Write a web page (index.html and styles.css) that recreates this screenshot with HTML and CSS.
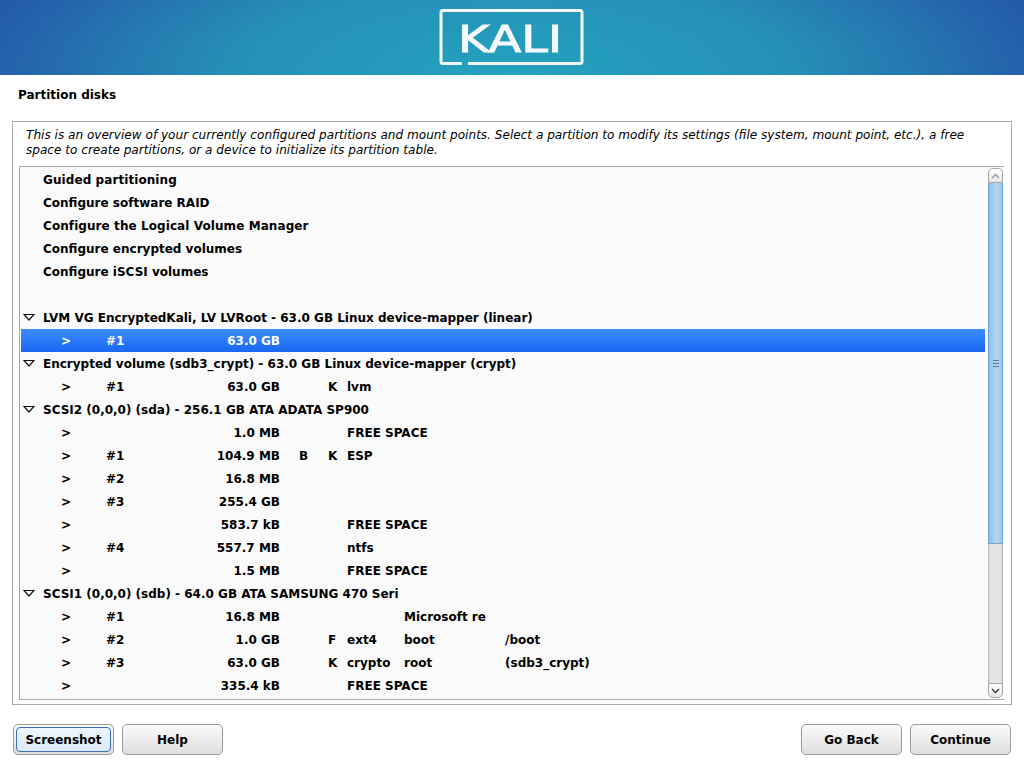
FILE: index.html
```html
<!DOCTYPE html>
<html lang="en">
<head>
<meta charset="utf-8">
<title>Partition disks</title>
<link rel="stylesheet" href="styles.css">
</head>
<body>
<header class="banner">
  <svg class="logo" width="146" height="60" viewBox="0 0 146 60">
    <path class="logo-frame" d="M23 54.500H4Q2 54.500 2 52.500V3.500Q2 1.500 4 1.500H141Q143 1.500 143 3.500V52.500Q143 54.500 141 54.500H29"/>
    <text class="logo-text" x="19" y="43" textLength="104" lengthAdjust="spacingAndGlyphs">KALI</text>
  </svg>
</header>
<h1 class="title">Partition disks</h1>
<main class="panel">
  <p class="intro">This is an overview of your currently configured partitions and mount points. Select a partition to modify its settings (file system, mount point, etc.), a free space to create partitions, or a device to initialize its partition table.</p>
  <div class="listbox">
    <div class="rows">
      <div class="row head menu">Guided partitioning</div>
      <div class="row head">Configure software RAID</div>
      <div class="row head menu">Configure the Logical Volume Manager</div>
      <div class="row head">Configure encrypted volumes</div>
      <div class="row head">Configure iSCSI volumes</div>
      <div class="row head"></div>
      <div class="row head"><svg class="tri" width="12" height="7" viewBox="0 0 12 7"><path d="M1 .5H11L6 6Z"/></svg>LVM VG EncryptedKali, LV LVRoot - 63.0 GB Linux device-mapper (linear)</div>
      <div class="row part selected"><span>&gt;</span><span>#1</span><span class="size">63.0 GB</span><span></span><span></span><span></span><span></span><span></span></div>
      <div class="row head"><svg class="tri" width="12" height="7" viewBox="0 0 12 7"><path d="M1 .5H11L6 6Z"/></svg>Encrypted volume (sdb3_crypt) - 63.0 GB Linux device-mapper (crypt)</div>
      <div class="row part"><span>&gt;</span><span>#1</span><span class="size">63.0 GB</span><span></span><span>K</span><span>lvm</span><span></span><span></span></div>
      <div class="row head"><svg class="tri" width="12" height="7" viewBox="0 0 12 7"><path d="M1 .5H11L6 6Z"/></svg>SCSI2 (0,0,0) (sda) - 256.1 GB ATA ADATA SP900</div>
      <div class="row part"><span>&gt;</span><span></span><span class="size">1.0 MB</span><span></span><span></span><span>FREE SPACE</span><span></span><span></span></div>
      <div class="row part"><span>&gt;</span><span>#1</span><span class="size">104.9 MB</span><span>B</span><span>K</span><span>ESP</span><span></span><span></span></div>
      <div class="row part"><span>&gt;</span><span>#2</span><span class="size">16.8 MB</span><span></span><span></span><span></span><span></span><span></span></div>
      <div class="row part"><span>&gt;</span><span>#3</span><span class="size">255.4 GB</span><span></span><span></span><span></span><span></span><span></span></div>
      <div class="row part"><span>&gt;</span><span></span><span class="size">583.7 kB</span><span></span><span></span><span>FREE SPACE</span><span></span><span></span></div>
      <div class="row part"><span>&gt;</span><span>#4</span><span class="size">557.7 MB</span><span></span><span></span><span>ntfs</span><span></span><span></span></div>
      <div class="row part"><span>&gt;</span><span></span><span class="size">1.5 MB</span><span></span><span></span><span>FREE SPACE</span><span></span><span></span></div>
      <div class="row head"><svg class="tri" width="12" height="7" viewBox="0 0 12 7"><path d="M1 .5H11L6 6Z"/></svg>SCSI1 (0,0,0) (sdb) - 64.0 GB ATA SAMSUNG 470 Seri</div>
      <div class="row part"><span>&gt;</span><span>#1</span><span class="size">16.8 MB</span><span></span><span></span><span></span><span>Microsoft re</span><span></span></div>
      <div class="row part"><span>&gt;</span><span>#2</span><span class="size">1.0 GB</span><span></span><span>F</span><span>ext4</span><span>boot</span><span>/boot</span></div>
      <div class="row part"><span>&gt;</span><span>#3</span><span class="size">63.0 GB</span><span></span><span>K</span><span>crypto</span><span>root</span><span>(sdb3_crypt)</span></div>
      <div class="row part"><span>&gt;</span><span></span><span class="size">335.4 kB</span><span></span><span></span><span>FREE SPACE</span><span></span><span></span></div>
    </div>
    <div class="scrollbar">
      <div class="step step-up"><svg width="9" height="6" viewBox="0 0 9 6"><path d="M1 5L4.500 1.500L8 5"/></svg></div>
      <div class="thumb"><i></i><i></i><i></i></div>
      <div class="trough"></div>
      <div class="step step-down"><svg width="9" height="6" viewBox="0 0 9 6"><path d="M1 1L4.500 4.500L8 1"/></svg></div>
    </div>
  </div>
</main>
<footer class="actions">
  <div class="focus-ring"><button class="btn btn-focus">Screenshot</button></div>
  <button class="btn">Help</button>
  <div class="spacer"></div>
  <button class="btn">Go Back</button>
  <button class="btn">Continue</button>
</footer>
</body>
</html>
```
FILE: styles.css
```css
* { box-sizing: border-box; }
html, body { margin: 0; height: 768px; overflow: hidden; }
body { background: #fff; color: #000; font: 12px "DejaVu Sans", sans-serif; display: flex; flex-direction: column; }
.banner { height: 75px; flex: none; display: flex; justify-content: center; padding-top: 9px; background: radial-gradient(ellipse 560px 190px at 50% 100%, #24a2bf 0%, #2590b6 50%, #2568ac 85%, #2458a8 100%); }
.logo { display: block; filter: blur(.4px); }
.logo-frame { fill: none; stroke: #f4f8fa; stroke-width: 3; }
.logo-text { font: 38px "DejaVu Sans", sans-serif; fill: #f6f9fb; stroke: #f6f9fb; stroke-width: 1; }
.title { margin: 0; height: 46px; flex: none; padding: 13px 0 0 18px; font-size: 12px; line-height: 15px; font-weight: bold; }
.panel { margin: 0 12px; height: 584px; flex: none; border: 1px solid #aaa; padding: 6px 7px 4px 6px; display: flex; flex-direction: column; }
.intro { margin: 0 0 7px 7px; height: 31px; max-width: 960px; font-size: 12.080px; font-style: italic; line-height: 15px; }
.listbox { flex: 1; min-height: 0; display: flex; border: 1px solid #aaa; border-right: 0; background: #fafafa; padding: 1px; }
.rows { flex: 1; min-width: 0; overflow: hidden; }
.row { height: 23px; line-height: 25px; font-weight: bold; white-space: nowrap; }
.head { position: relative; padding-left: 22px; }
.menu { letter-spacing: .08px; }
.tri { position: absolute; left: 2px; top: 8px; }
.tri path { fill: none; stroke: #111; stroke-width: 1.200; }
.part { display: grid; padding-left: 40px; grid-template-columns: 45px 40px 153px 29px 19px 57px 101px 1fr; }
.size { text-align: right; padding-right: 19px; }
.selected { color: #fff; background: linear-gradient(#3b8cff, #1a66f2); }
.scrollbar { width: 15px; flex: none; margin-left: 3px; display: flex; flex-direction: column; }
.step { height: 15px; flex: none; display: flex; align-items: center; justify-content: center; background: linear-gradient(#fff, #e6e6e6); border: 1px solid #a6a6a6; }
.step-up { border-radius: 5px 5px 0 0; }
.step-down { border-radius: 0 0 5px 5px; }
.step path { fill: none; stroke: #333; stroke-width: 1.300; }
.step-up path { stroke: #999; }
.thumb { height: 361px; flex: none; display: flex; flex-direction: column; align-items: center; justify-content: center; gap: 2px; border: 1px solid #6ea5d4; border-top: 0; background: linear-gradient(90deg, #8fc0e8, #b5d8f3 60%, #9cc7ea); }
.thumb i { width: 6px; height: 1px; background: #4d7aa6; }
.trough { flex: 1; background: linear-gradient(90deg, #b4b4b4, #e4e4e4 15%, #e4e4e4 85%, #b4b4b4); }
.actions { flex: 1; display: flex; align-items: flex-start; gap: 8px; padding: 19px 13px 0; }
.spacer { flex: 1; }
.btn { width: 101px; height: 31px; padding: 0; font: bold 12px "DejaVu Sans", sans-serif; color: #000; border: 1px solid #999; border-radius: 5px; background: linear-gradient(#fbfbfb, #dedede); }
.focus-ring { width: 101px; height: 31px; border: 1px solid #999; border-radius: 5px; padding: 2px; background: linear-gradient(#fbfbfb, #dedede); }
.btn-focus { width: 100%; height: 100%; border-color: #3d6fb4; border-radius: 4px; background: linear-gradient(#eef5fd, #dde9f9); }
```
